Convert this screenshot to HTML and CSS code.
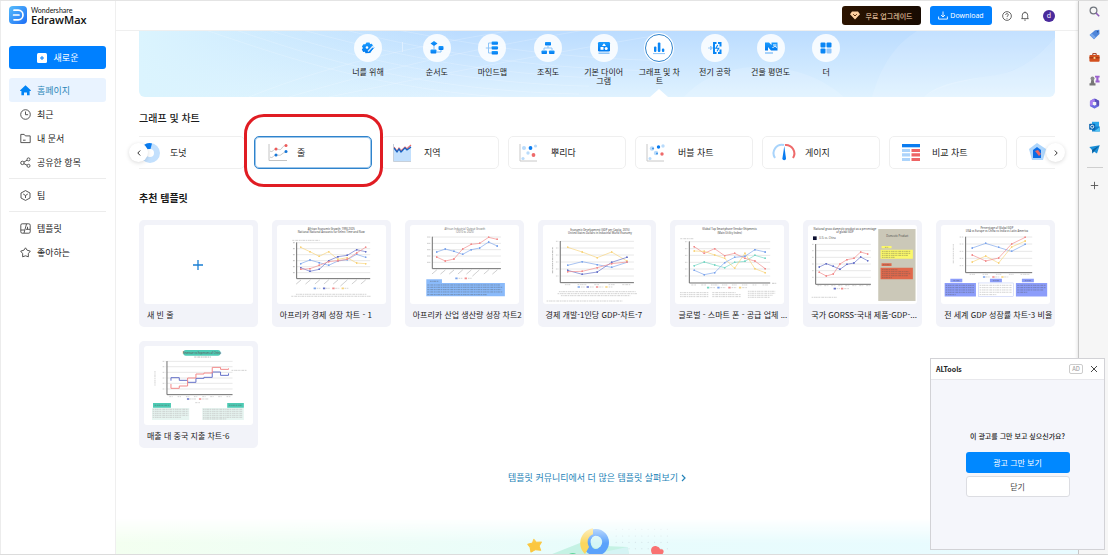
FILE: index.html
```html
<!DOCTYPE html>
<html lang="ko">
<head>
<meta charset="utf-8">
<title>EdrawMax</title>
<link rel="stylesheet" href="styles.css">
</head>
<body>
<svg class="defs" width="0" height="0" aria-hidden="true">
  <defs>
    <marker id="m-blue" viewBox="0 0 6 6" refX="3" refY="3" markerUnits="userSpaceOnUse" markerWidth="6" markerHeight="6"><circle cx="3" cy="3" r="3" fill="#7ba4ec"/></marker>
    <marker id="m-navy" viewBox="0 0 6 6" refX="3" refY="3" markerUnits="userSpaceOnUse" markerWidth="6" markerHeight="6"><circle cx="3" cy="3" r="3" fill="#6470c8"/></marker>
    <marker id="m-red" viewBox="0 0 6 6" refX="3" refY="3" markerUnits="userSpaceOnUse" markerWidth="6" markerHeight="6"><circle cx="3" cy="3" r="3" fill="#f28b8b"/></marker>
    <marker id="m-yellow" viewBox="0 0 6 6" refX="3" refY="3" markerUnits="userSpaceOnUse" markerWidth="6" markerHeight="6"><circle cx="3" cy="3" r="3" fill="#f8d37a"/></marker>
    <marker id="m-teal" viewBox="0 0 6 6" refX="3" refY="3" markerUnits="userSpaceOnUse" markerWidth="6" markerHeight="6"><circle cx="3" cy="3" r="3" fill="#74d6c4"/></marker>
    <linearGradient id="g-logo" x1="0" y1="0" x2="1" y2="1"><stop offset="0" stop-color="#57bdfb"/><stop offset="1" stop-color="#1c6df6"/></linearGradient>
    <linearGradient id="g-blue" x1="0" y1="0" x2="0" y2="1"><stop offset="0" stop-color="#1a9bff"/><stop offset="1" stop-color="#0079ee"/></linearGradient>
  </defs>
</svg>

<div class="app">
  <aside class="sidebar">
    <a class="logo" href="#">
      <svg class="logo-mark" viewBox="0 0 18 18"><rect width="18" height="18" rx="4" fill="url(#g-logo)"/><path d="M5 4.2h4.2a4.8 4.8 0 0 1 0 9.6H5M4.6 9h5.4" fill="none" stroke="#fff" stroke-width="1.7" stroke-linecap="round"/></svg>
      <span class="logo-text"><span class="logo-top">Wondershare</span><strong class="logo-name">EdrawMax</strong></span>
    </a>
    <button class="new-btn" type="button">
      <svg viewBox="0 0 10 10"><rect width="10" height="10" rx="1.5" fill="#fff"/><path d="M5 3v4M3 5h4" stroke="#0080ff" stroke-width="1"/></svg>
      <span>새로운</span>
    </button>
    <nav class="menu">
      <a class="menu-item active" href="#"><svg viewBox="0 0 11 11"><path d="M5.5.3 10.8 5.3c.3.4.1.8-.4.8H9.6v4.2H7V7.4H4v2.9H1.4V6.1H.6c-.5 0-.7-.4-.4-.8z" fill="#0083f5"/></svg>홈페이지</a>
      <a class="menu-item" href="#"><svg class="line" viewBox="0 0 11 11"><circle cx="5.5" cy="5.5" r="4.8"/><path d="M5.5 2.500v3.200h2.600"/></svg>최근</a>
      <a class="menu-item" href="#"><svg class="line" viewBox="0 0 11 11"><path d="M.8 9.600V1.400h3.400l1.200 1.500h4.800v6.700zM3 7.200h2.600"/></svg>내 문서</a>
      <a class="menu-item" href="#"><svg class="line" viewBox="0 0 11 11"><circle cx="2.4" cy="5.9" r="1.7"/><circle cx="8.5" cy="2.4" r="1.5"/><circle cx="8.5" cy="8.8" r="1.5"/><path d="M3.900 5.100l3.200-1.900M3.900 6.700l3.200 1.500"/></svg>공유한 항목</a>
      <hr>
      <a class="menu-item" href="#"><svg class="line" viewBox="0 0 11 11"><path d="M5.500.6 10 3v5L5.500 10.400 1 8V3zM3.200 4l2.300 1.500L7.800 4M5.500 5.500V8"/></svg>팀</a>
      <hr>
      <a class="menu-item" href="#"><svg class="line" viewBox="0 0 11 11"><rect x=".8" y=".8" width="9.4" height="9.4" rx="1.4"/><path d="M6.500 1 4 10M6 6.300h4M7.500 6.300V3.800M1 7h3.600"/></svg>템플릿</a>
      <a class="menu-item" href="#"><svg class="line" viewBox="0 0 11 11"><path d="M5.500.8 7.100 3.200l3.200.9-2 2.600.1 3.100-2.900-1-2.900 1 .1-3.100-2-2.600 3.200-.9z" stroke-linejoin="round"/></svg>좋아하는</a>
    </nav>
  </aside>

  <main class="main">
    <header class="topbar">
      <button class="upgrade" type="button"><svg viewBox="0 0 10 9"><path d="M2 .5h6L10 3.300 5 8.600 0 3.300z" fill="#ffd0a0"/><path d="M3.200 3.200 5 5l1.800-1.800" fill="none" stroke="#5a2c08" stroke-width="1"/></svg>무료 업그레이드</button>
      <button class="download" type="button"><svg viewBox="0 0 10 9"><path d="M5 .5v5M3 4l2 2 2-2M.6 5.500v2.600h8.800V5.500" fill="none" stroke="#fff" stroke-width=".9"/></svg>Download</button>
      <button class="icon-btn" type="button" aria-label="도움말"><svg class="line" viewBox="0 0 11 11"><circle cx="5.5" cy="5.5" r="4.8"/><path d="M4 4.300c.1-2 3-1.800 3-.1 0 1.100-1.500 1.200-1.500 2.300M5.500 7.600v.9"/></svg></button>
      <button class="icon-btn" type="button" aria-label="알림"><svg class="line" viewBox="0 0 11 11"><path d="M1.500 8.400h8M2.500 8.300V4.600a3 3 0 0 1 6 0v3.700M4.600 10h1.800M5.500.6v1"/></svg></button>
      <button class="avatar" type="button">d</button>
    </header>

    <div class="content">
      <section class="banner">
        <svg class="banner-art" viewBox="0 0 916 67" preserveAspectRatio="none" aria-hidden="true">
          <g fill="none" stroke="#fff" stroke-opacity=".2"><path d="M40-10C130 20 240 66 420 70M70-10C160 20 260 60 440 64M100-10C190 18 290 52 450 56M130-10C220 14 320 44 470 48M170-10C250 10 350 36 500 40M210-10C300 6 380 26 520 30"/><path d="M150 67C240 40 330 18 470-5M110 67C200 30 300 10 420-8M190 67C290 46 380 28 520 4"/></g>
          <path d="M733 67C742 35 756 14 778 0H916V6C900 26 882 40 856 45S800 55 785 67z" fill="#fff" fill-opacity=".13"/>
          <path d="M785 67C800 52 830 49 856 45S902 24 916 6V67z" fill="#fff" fill-opacity=".22"/>
          <path d="M545 67C580 26 660 26 705 67z" fill="#fff" fill-opacity=".14"/>
        </svg>
        <nav class="cats">
          <a class="cat" href="#"><span class="disc"><svg viewBox="0 0 14 14"><path d="M5.500 1.500h3l.6 1.600 1.700-.4 1.600 2.600-1.200 1.200 1 1-3 4.600-4.700.1-.6-1.400-1.700.2-1.400-2.600L2 7 .9 5.600l1.500-2.400 1.900.1z" fill="url(#g-blue)"/><path d="M7 10.500 12 5" stroke="#dcecff" stroke-width="1.200"/><path d="M8 12 13 6.500" stroke="#0a86f5" stroke-width="1"/><circle cx="6" cy="6.500" r="1.300" fill="#fff"/></svg></span>너를 위해</a>
          <span class="cat-rule"></span>
          <a class="cat" href="#"><span class="disc"><svg viewBox="0 0 14 14"><path d="M4 0 7.500 2.500 4 5 .5 2.500z" fill="url(#g-blue)"/><rect x=".5" y="8.500" width="6" height="4" rx="1" fill="url(#g-blue)"/><rect x="8.500" y="5" width="5" height="4" rx="1" fill="url(#g-blue)"/><path d="M4 5v4M7 11h4V9" fill="none" stroke="#7dbcf8"/></svg></span>순서도</a>
          <a class="cat" href="#"><span class="disc"><svg viewBox="0 0 14 14"><rect x="6.500" y=".5" width="6.500" height="3.300" rx="1" fill="url(#g-blue)"/><rect x="6.500" y="5.300" width="6.500" height="3.300" rx="1" fill="url(#g-blue)"/><rect x="6.500" y="10.100" width="6.500" height="3.300" rx="1" fill="url(#g-blue)"/><path d="M6.500 2H3.500v10h3M.8 7h5.700" fill="none" stroke="#8dc4f8"/></svg></span>마인드맵</a>
          <a class="cat" href="#"><span class="disc"><svg viewBox="0 0 14 14"><rect x="4" y="1" width="6" height="3.500" rx=".8" fill="url(#g-blue)"/><rect x=".5" y="9.500" width="5.500" height="3.500" rx=".8" fill="url(#g-blue)"/><rect x="8" y="9.500" width="5.500" height="3.500" rx=".8" fill="url(#g-blue)"/><path d="M7 4.500V7M3 9.500V7h8v2.500" fill="none" stroke="#8dc4f8"/></svg></span>조직도</a>
          <a class="cat" href="#"><span class="disc"><svg viewBox="0 0 14 14"><rect x="1" y="1" width="12" height="9.500" rx="1.200" fill="url(#g-blue)"/><path d="M7 2.200 9 5H5z" fill="#fff"/><rect x="3.500" y="6" width="3" height="2.800" fill="#fff"/><circle cx="9.200" cy="7.400" r="1.500" fill="#fff"/><rect x="1.500" y="11.500" width="11" height="1.500" fill="#8dc4f8"/></svg></span>기본 다이어그램</a>
          <a class="cat active" href="#"><span class="disc"><svg viewBox="0 0 14 14"><rect x="2" y="5.500" width="2.400" height="5.500" rx="1" fill="#0a86f5"/><rect x="5.800" y="1.500" width="2.600" height="9.500" rx="1" fill="#0a86f5"/><rect x="9.900" y="7.500" width="2.400" height="3.500" rx="1" fill="#0a86f5"/><path d="M1 12.600h12" stroke="#8dc4f8" stroke-width="1"/></svg></span>그래프 및 차트</a>
          <a class="cat" href="#"><span class="disc"><svg viewBox="0 0 14 14"><path d="M6.500 2H6v10h.500M6 2h2.500M6 12h2.500M10 2h2.500v3.500M12.500 8.500V12H10" fill="none" stroke="#0a86f5" stroke-width="2"/><path d="M9.800 4 7.800 7.300h3L9 10.300" fill="none" stroke="#0a86f5" stroke-width="1.100"/><path d="M0 7h2M2.500 5v4l2-2z" fill="#8dc4f8" stroke="#8dc4f8" stroke-width=".8"/></svg></span>전기 공학</a>
          <a class="cat" href="#"><span class="disc"><svg viewBox="0 0 14 14"><path d="M1 1.500h4L7.500 4V1.500h6v8H7L4 6v3.500H1z" fill="url(#g-blue)"/><path d="M9 4h3.500M8.500 7c1.500-2 3-2 4.500-.5" fill="none" stroke="#fff" stroke-width="1"/><path d="M1 12h8" stroke="#8dc4f8" stroke-width="1.600"/></svg></span>건물 평면도</a>
          <a class="cat" href="#"><span class="disc"><svg viewBox="0 0 14 14"><rect x="1.500" y="1.500" width="5" height="5" rx="1" fill="#0a86f5"/><rect x="7.500" y="1.500" width="5" height="5" rx="1" fill="#0a86f5"/><rect x="1.500" y="7.500" width="5" height="5" rx="1" fill="#0a86f5"/><rect x="7.500" y="7.500" width="5" height="5" rx="1" fill="#93c6fa"/></svg></span>더</a>
        </nav>
      </section>

      <h2 class="title light">그래프 및 차트</h2>
      <div class="carousel">
        <div class="track-clip">
          <div class="track">
            <a class="type" href="#"><svg viewBox="0 0 20 20"><circle cx="9" cy="10" r="7" fill="none" stroke="#c3e0fd" stroke-width="6"/><path d="M3 2Q7-1 11 .5L9.500 6H6z" fill="#0a7cf0"/></svg>도넛</a>
            <a class="type selected" href="#"><svg viewBox="0 0 20 20"><path d="M1 1v16.500h18" fill="none" stroke="#c4c4c4"/><path d="M2 8c3 2 3-2 6-2s4 2 6-1 3-2 4-3M2 14c3 2 3-2 6-2s4 1 6-1 3-1 4-2" fill="none" stroke="#b9b9b9" stroke-width=".8"/><circle cx="8" cy="6" r="1.500" fill="#ee5a5a"/><circle cx="18" cy="2.500" r="1.500" fill="#ee5a5a"/><circle cx="8" cy="12" r="1.500" fill="#1677d8"/><circle cx="18" cy="8.500" r="1.500" fill="#1677d8"/></svg>줄</a>
            <a class="type" href="#"><svg viewBox="0 0 20 20"><g transform="translate(-2)"><path d="M1 6 4 9l3-4 4 3 3-4 4-2v16H1z" fill="#c3e0fd"/><path d="M1 4l3 4 2-3 2 3 4-4 2 2 4-4" fill="none" stroke="#ee6a6a" stroke-width="1.200"/><path d="M1 5l3 4 2-3 2 3 4-4 2 2 4-3" fill="none" stroke="#1263c4" stroke-width="1.300"/><path d="M.5 1v17.500H18" fill="none" stroke="#b9c4d0" stroke-width=".8"/></g></svg>지역</a>
            <a class="type" href="#"><svg viewBox="0 0 20 20"><path d="M-2 1v17h17" fill="none" stroke="#c8c8c8"/><g fill="#b9dbfb"><circle cx="2" cy="5" r="2"/><circle cx="13.500" cy="3" r="1.600"/><circle cx="6" cy="10" r="1.700"/><circle cx="1" cy="15.500" r="1.600"/></g><circle cx="8.500" cy="5" r="1.900" fill="#0a7cf0"/><circle cx="11.500" cy="12" r="1.900" fill="#ee6a6a"/></svg>뿌리다</a>
            <a class="type" href="#"><svg viewBox="0 0 20 20"><path d="M-2 1v17h17" fill="none" stroke="#c8c8c8"/><g fill="#b9dbfb"><circle cx="3" cy="5.500" r="2.200"/><circle cx="14" cy="3" r="1.700"/><circle cx="7" cy="10" r="2.200"/><circle cx="1" cy="15.500" r="1.500"/></g><circle cx="4" cy="5.500" r="1" fill="#3c93e8"/><circle cx="9.500" cy="4" r="1.700" fill="#0a7cf0"/><circle cx="8" cy="10.500" r="1" fill="#3c93e8"/><circle cx="13" cy="11" r="1.700" fill="#ee6a6a"/></svg>버블 차트</a>
            <a class="type" href="#"><svg viewBox="0 0 20 20"><path d="M-1 15A8.500 8.500 0 0 1 8 2" fill="none" stroke="#a9d4fb" stroke-width="2"/><path d="M9 2A8.500 8.500 0 0 1 17 15" fill="none" stroke="#ee6a6a" stroke-width="2"/><path d="M8.300 3 10 15.500a1.700 1.700 0 0 1-3.600 0z" fill="#0a7cf0"/></svg>게이지</a>
            <a class="type" href="#"><svg viewBox="0 0 20 20"><rect x="-1" y="1" width="18" height="3.300" fill="#0a7cf0"/><path d="M-1 7.500h8M-1 11.800h8M-1 16.500h8" stroke="#acd4fb" stroke-width="3.200"/><path d="M8.500 7.500H17M8.500 11.800H17M8.500 16.500H17" stroke="#ee6464" stroke-width="3.200"/></svg>비교 차트</a>
            <a class="type" href="#" aria-label="레이더"><svg viewBox="0 0 20 20"><path d="M7 0 16 6 13 17H2L-1 6z" fill="#aed6fc"/><path d="M7 4 11 7v8H3V7z" fill="#0a6ce6"/><path d="M5 8l3-1 3 4-2 2z" fill="#ee6464"/></svg></a>
          </div>
        </div>
        <button class="arrow prev" type="button" aria-label="이전"><svg viewBox="0 0 8 8"><path d="M5.200 1.500 2.800 4l2.400 2.500"/></svg></button>
        <button class="arrow next" type="button" aria-label="다음"><svg viewBox="0 0 8 8"><path d="M2.800 1.500 5.200 4 2.800 6.500"/></svg></button>
        <span class="highlight"></span>
      </div>

      <h2 class="title">추천 템플릿</h2>
      <div class="templates">
        <a class="tpl" href="#"><span class="thumb"><svg class="plus" viewBox="0 0 10 10"><path d="M5 0v10M0 5h10" stroke="#1a7fd4" stroke-width="1.300"/></svg></span><span class="name">새 빈 줄</span></a>

        <a class="tpl" href="#"><span class="thumb"><svg class="chart" viewBox="441 30 327 237">
          <g class="head"><text x="604" y="45">African Economic Growth: 1990-2025</text><text x="604" y="54">National National Accounts for Select Time and Now</text></g>
          <path class="scrap" d="M487 76h82"/>
          <path class="grid" d="M500 83h221M500 101h221M500 119h221M500 137h221M500 155h221M500 173h221"/>
          <path class="axis" d="M500 82v109h221"/>
          <path class="ticks" d="M513 195l-14 12M541 195l-14 12M569 195l-14 12M596 195l-14 12M624 195l-14 12M652 195l-20 18M680 195l-14 12M707 195l-14 12M489 83h6M489 101h6M489 119h6M489 137h6M489 155h6M489 173h6"/>
          <polyline class="s yellow" points="512,97 540,110 568,124 596,110 624,133 652,128 680,144 707,146"/>
          <polyline class="s blue" points="512,146 540,135 568,143 596,151 624,138 652,134 680,118 707,127"/>
          <polyline class="s navy" points="512,158 540,169 568,163 596,137 624,125 652,121 680,104 707,110"/>
          <polyline class="s red" points="512,163 540,161 568,151 596,140 624,137 652,133 680,114 707,97"/>
          <path d="M551 220h7" class="k blue"/><path d="M579 220h7" class="k navy"/><path d="M607 220h7" class="k red"/><path d="M635 220h7" class="k yellow"/>
          <path class="scrap" d="M560 220h12M588 220h12M616 220h12M644 220h12M498 238h212M484 244h238"/>
        </svg></span><span class="name">아프리카 경제 성장 차트 - 1</span></a>

        <a class="tpl" href="#"><span class="thumb"><svg class="chart" viewBox="840 30 327 237">
          <g class="head sm"><text x="1005" y="46">African Industrial Output Growth</text><text x="1005" y="55">(2010 to 2025)</text></g>
          <path class="grid" d="M907 66h206M907 85h206M907 104h206M907 123h206M907 142h206"/>
          <path class="axis" d="M907 65v96h206"/>
          <path class="ticks" d="M920 165l-14 12M946 165l-14 12M972 165l-14 12M998 165l-14 12M1024 165l-14 12M1048 165l-20 18M1076 165l-14 12M1102 165l-14 12M892 66h9M892 85h9M892 104h9M892 123h9M892 142h9"/>
          <polyline class="s blue" points="920,111 946,102 972,109 998,118 1024,104 1049,99 1076,81 1102,93"/>
          <polyline class="s red" points="920,126 946,138 972,132 998,102 1024,88 1049,85 1076,67 1102,73"/>
          <path d="M976 190h7" class="k blue"/><path d="M1004 190h7" class="k red"/><path class="scrap" d="M986 190h12M1014 190h12"/>
          <path d="M889 193h47v11h189v40H889z" fill="#8abafa"/><path class="scrap dark" d="M900 199h25M892 210h218M892 217h226M892 224h222M892 231h226M892 239h180"/>
        </svg></span><span class="name">아프리카 산업 생산량 성장 차트2</span></a>

        <a class="tpl" href="#"><span class="thumb"><svg class="chart" viewBox="39 30 325 237">
          <g class="head"><text x="209" y="48">Economic Development (GDP per Capita, 2015)</text><text x="209" y="57">United States Dollars in Industrial World Economy</text></g>
          <path class="grid" d="M90 79h221M90 99h221M90 120h221M90 141h221M90 162h221M90 183h221"/>
          <path class="axis" d="M90 78v125h221"/>
          <path class="scrap dark" d="M67 97v78"/>
          <path class="scrap" d="M77 79h8M77 99h8M77 120h8M77 141h8M77 162h8M77 183h8M104 209h16M142 209h28M192 209h14M235 209h20M276 209h24"/>
          <polyline class="s yellow" points="112,97 156,111 201,128 244,111 290,138"/>
          <polyline class="s blue" points="112,151 156,140 201,149 244,157 290,142"/>
          <polyline class="s navy" points="112,166 156,178 201,171 244,142 290,127"/>
          <polyline class="s red" points="112,170 156,169 201,158 244,146 290,141"/>
          <path d="M142 216h7" class="k blue"/><path d="M169 216h7" class="k navy"/><path d="M197 216h7" class="k red"/><path d="M225 216h7" class="k yellow"/>
          <path class="scrap" d="M152 216h12M179 216h12M207 216h12M235 216h12M86 230h230M82 236h238M92 242h208M49 258h228"/>
        </svg></span><span class="name">경제 개발-1인당 GDP-차트-7</span></a>

        <a class="tpl" href="#"><span class="thumb"><svg class="chart" viewBox="435 30 327 237">
          <g class="head"><text x="599" y="46">Global Top Smartphone Vendor Shipments</text><text x="599" y="57">(Main Utility Index)</text></g>
          <path class="scrap" d="M451 71h41"/>
          <path class="grid" d="M478 80h243M478 101h243M478 121h243M478 142h243M478 162h243M478 183h243"/>
          <path class="axis" d="M478 79v125h243"/>
          <path class="scrap dark" d="M727 205h12"/>
          <path class="scrap" d="M465 80h8M465 101h8M465 121h8M465 142h8M465 162h8M465 183h8M484 210h14M514 210h14M543 210h22M576 210h16M606 210h14M636 210h16M668 210h12M698 210h16"/>
          <polyline class="s teal" points="493,152 523,141 554,150 584,158 614,142 645,139 675,121 706,130"/>
          <polyline class="s red" points="493,95 523,115 554,101 584,122 614,115 645,130 675,138 706,161"/>
          <polyline class="s yellow" points="493,108 523,109 554,120 584,130 614,160 645,115 675,161 706,173"/>
          <polyline class="s blue" points="493,166 523,179 554,173 584,143 614,127 645,124 675,104 706,111"/>
          <path d="M531 218h7" class="k teal"/><path d="M562 218h7" class="k blue"/><path d="M595 218h7" class="k red"/><path d="M627 218h7" class="k yellow"/>
          <path class="scrap" d="M541 218h14M572 218h14M605 218h14M637 218h14M450 233h86M450 239h86M450 245h86M547 233h70M547 239h86M547 245h86M654 229h82M654 235h82M654 241h74M654 247h66"/>
        </svg></span><span class="name">글로벌 - 스마트 폰 - 공급 업체 ...</span></a>

        <a class="tpl" href="#"><span class="thumb"><svg class="chart" viewBox="39 30 327 237">
          <g class="head"><text x="150" y="45">National gross domestic product as a percentage</text><text x="150" y="54">of global GDP</text></g>
          <rect x="54" y="64" width="11" height="11" fill="#0d1030"/><text class="lbl" x="73" y="73">U.S. vs. China</text>
          <path class="grid" d="M62 88h166M62 107h166M62 127h166M62 147h166M62 167h166M62 187h166"/>
          <path class="axis" d="M62 87v121h166"/>
          <path class="scrap" d="M51 88h6M51 107h6M51 127h6M51 147h6M51 167h6M51 187h6M67 212h12M88 212h12M109 212h12M130 212h12M151 212h12M172 212h12M193 212h12M214 212h12M125 221h10M148 221h14M50 247h75"/>
          <polyline class="s navy" points="73,156 94,146 115,154 135,163 156,148 177,144 197,126 218,137"/>
          <polyline class="s red" points="73,172 94,183 115,177 135,147 156,134 177,130 197,111 218,117"/>
          <path d="M116 221h7" class="k navy"/><path d="M138 221h7" class="k red"/>
          <rect x="250" y="42" width="112" height="216" fill="#cbc8b8"/><text class="lbl" x="274" y="66">Domestic Product</text>
          <path d="M260 93h30v7h-30zM257 104h97v27h-97z" fill="#fbf86a"/><path d="M260 145h30v8h-30zM257 158h97v35h-97z" fill="#e0694c"/>
          <path class="scrap dark" d="M270 97h10M261 109h86M261 115h86M261 121h80M261 127h40M264 149h22M261 164h48M261 170h82M261 176h86M261 182h80M261 188h30"/>
        </svg></span><span class="name">국가 GORSS-국내 제품-GDP-...</span></a>

        <a class="tpl" href="#"><span class="thumb"><svg class="chart" viewBox="438 30 327 237">
          <g class="head"><text x="606" y="43">Percentage of Global GDP</text><text x="606" y="52">USA vs Europe vs China vs India vs Latin America</text></g>
          <path class="grid" d="M512 66h200M512 87h200M512 109h200M512 130h200M512 152h200"/>
          <path class="axis" d="M512 65v108h200"/>
          <path class="scrap" d="M475 87v58M494 66h12M494 87h12M494 109h12M494 130h12M494 152h12M524 178h16M563 178h16M603 178h16M642 178h14M677 178h28"/>
          <polyline class="s blue" points="532,99 572,85 611,97 650,109 691,88"/>
          <polyline class="s yellow" points="532,141 572,123 611,144 650,96 691,78"/>
          <polyline class="s red" points="532,120 572,138 611,129 650,87 691,67"/>
          <path d="M564 186h7" class="k blue"/><path d="M592 186h7" class="k red"/><path d="M619 186h7" class="k yellow"/><path class="scrap" d="M573 186h12M601 186h12M628 186h12"/>
          <path d="M466 191h36v11h-36zM585 191h36v11h-36zM681 191h36v11h-36zM449 204h94v41h-94zM663 204h94v41h-94z" fill="#8c9dfa"/><rect x="550" y="204" width="105" height="41" fill="#fff" stroke="#93a6f0"/>
          <path class="scrap dark" d="M475 197h18M594 197h18M690 197h18M452 211h86M452 218h86M452 225h86M452 232h86M452 239h30M667 211h86M667 218h86M667 225h80M667 232h30"/><path class="scrap" d="M554 211h96M554 218h96M554 225h96M554 232h96M554 239h50"/>
        </svg></span><span class="name">전 세계 GDP 성장률 차트-3 비율</span></a>

        <a class="tpl" href="#"><span class="thumb"><svg class="chart" viewBox="42 33 327 237">
          <rect x="160" y="45" width="112" height="17" rx="8" fill="#4dcab4"/>
          <g class="head"><text x="216" y="56">Revenue vs Expenses of China</text></g><path class="scrap dark" d="M193 66h50"/>
          <path class="grid" d="M111 79h197M111 95h197M111 112h197M111 129h197M111 145h197M111 162h197"/>
          <path class="axis" d="M111 78v101h197"/>
          <path class="scrap" d="M75 108v44M98 79h8M98 95h8M98 112h8M98 129h8M98 145h8M98 162h8M118 185h10M143 185h10M168 185h10M192 185h10M217 185h10M241 185h10M265 185h10M290 185h12M305 106h47M180 192h20M217 192h20M196 203h14"/>
          <path class="step navy" d="M123 137v-9h25v8h25v6h25v-12h24v-3h25v-16h25v10h24v-6"/>
          <path class="step red" d="M123 147v13h25v-7h25v-24h25v-12h24v-3h25v-17h25v6h24v-3"/>
          <path d="M171 192h7" class="k navy"/><path d="M207 192h7" class="k red"/>
          <path d="M69 204h54v14H69zM292 204h50v14h-50z" fill="#4dcab4"/><path d="M66 219h112v36H66zM217 219h125v36H217z" fill="#e7f5f1"/>
          <path class="scrap dark" d="M74 211h44M297 211h40"/><path class="scrap" d="M68 223h108M68 229h108M68 235h108M68 241h108M68 247h86M219 223h120M219 229h120M219 235h120M219 241h120M219 247h120M219 252h70"/>
        </svg></span><span class="name">매출 대 중국 지출 차트-6</span></a>
      </div>

      <a class="more" href="#">템플릿 커뮤니티에서 더 많은 템플릿 살펴보기 <svg viewBox="0 0 5 8"><path d="M1 1l3 3-3 3" fill="none" stroke="#2583b8" stroke-width="1.200"/></svg></a>
    </div>

    <footer class="foot">
      <svg viewBox="42 525 500 90" preserveAspectRatio="none" aria-hidden="true">
        <g fill="none" stroke="#cfdfe4" stroke-width="3" stroke-linecap="round" stroke-dasharray="0 16"><path d="M340 541h132M340 561h132M340 580h132M340 599h132"/></g>
        <path d="M180 615 262 576 300 590 368 594 372 615z" fill="#c5f2e4"/><path d="M300 611 368 594 372 615H290z" fill="#d5f4f4"/><path d="M222 615q10-6 18 0z" fill="#5fd69c"/>
        <ellipse cx="289" cy="580" rx="23" ry="30" fill="none" stroke="#5ba2fb" stroke-width="20"/><path d="M262 615C240 590 250 545 282 538V556C268 562 266 580 272 594z" fill="#fbd75f"/><ellipse cx="291" cy="579" rx="14" ry="18" fill="#d4f5f6"/>
        <path d="M134 571l6 9 13-1-6 12 4 13-13-2-11 7-2-14-6-9 12-4z" fill="#fbc740" stroke="#fbc740" stroke-width="3" stroke-linejoin="round"/>
        <path d="M430 615C423 602 430 588 441 592 449 595 449 600 450 601 457 599 462 606 456 615z" fill="#f97272"/>
      </svg>
    </footer>
  </main>

  <aside class="edge">
    <button type="button" aria-label="검색"><svg viewBox="0 0 11 11"><circle cx="4.500" cy="4.500" r="3.400" fill="none" stroke="#70757d" stroke-width="1.200"/><path d="M7 7l3.200 3.200" stroke="#8e5cb8" stroke-width="1.600"/></svg></button>
    <button type="button" aria-label="쇼핑"><svg viewBox="0 0 11 11"><path d="M6 1.200 10.300.8 10.500 5 5 10.200.6 6z" fill="#4f86da"/><path d="M.6 6 5 10.200 7 8.300 2.600 4.200z" fill="#76a6ea"/><circle cx="8.600" cy="2.800" r=".8" fill="#234f96"/></svg></button>
    <button type="button" aria-label="도구"><svg viewBox="0 0 11 11"><path d="M3.800 3V1.600h3.400V3" fill="none" stroke="#a5391a" stroke-width="1"/><rect x=".4" y="3" width="10.200" height="6.800" rx="1" fill="#d3501e"/><path d="M.4 5.800h10.200" stroke="#8f2f12" stroke-width=".9"/><rect x="4.600" y="4.900" width="1.800" height="2" fill="#ffd08a"/></svg></button>
    <button type="button" aria-label="게임"><svg viewBox="0 0 11 11"><circle cx="3.500" cy="3.500" r="2" fill="#8a8a8a"/><path d="M2.300 5h2.400l.6 3.200H6.500v2.300H.5V8.200h1.200z" fill="#777"/><path d="M6 .8h4.600v1.800H9.500v3h1.100v1.900H6.500V5.600h.8v-3H6z" fill="#9b62cf"/></svg></button>
    <button type="button" aria-label="Microsoft 365"><svg viewBox="0 0 11 11"><path d="M5.500 1.800 8.800 3.600v3.800L5.500 9.200 2.200 7.400V3.600z" fill="none" stroke="#6a6be0" stroke-width="2.600" stroke-linejoin="round"/><path d="M5.500 1.800 8.800 3.600v3.800" fill="none" stroke="#5a50b8" stroke-width="2.600"/><path d="M2.200 7.400V3.600l3.300-1.800" fill="none" stroke="#a97cf0" stroke-width="2.400"/></svg></button>
    <button type="button" aria-label="Outlook"><svg viewBox="0 0 11 11"><rect x="3" y=".8" width="7" height="6" fill="#2aa6ea"/><path d="M3 5.500h7.800v5H3z" fill="#1680cc"/><path d="M5 10.500 10.800 6v4.500z" fill="#52c4f4"/><rect x=".2" y="2.700" width="6" height="6" rx=".8" fill="#0a64b0"/><circle cx="3.200" cy="5.700" r="1.500" fill="none" stroke="#fff" stroke-width=".9"/></svg></button>
    <button type="button" aria-label="드롭"><svg viewBox="0 0 11 11"><path d="M.3 3 10.700 1.200 8 9.500 4.800 7.500 3.500 9.500 3 6z" fill="#1a8fd8"/><path d="M3 6 10.700 1.200 4.800 7.500 3.500 9.500z" fill="#0a5f9e"/></svg></button>
    <hr>
    <button type="button" aria-label="추가"><svg viewBox="0 0 11 11"><path d="M5.500 1.800v7.400M1.800 5.500h7.400" stroke="#555" stroke-width=".9"/></svg></button>
  </aside>
</div>

<section class="ad">
  <header class="ad-head"><strong>ALTools</strong><span class="ad-tag">AD</span><button type="button" aria-label="닫기"><svg viewBox="0 0 8 8"><path d="M1 1l6 6M7 1 1 7" stroke="#333" stroke-width=".9"/></svg></button></header>
  <div class="ad-body">
    <p>이 광고를 그만 보고 싶으신가요?</p>
    <button class="ad-primary" type="button">광고 그만 보기</button>
    <button class="ad-secondary" type="button">닫기</button>
  </div>
</section>
</body>
</html>
```

FILE: styles.css
```css
* { box-sizing: border-box; }

body {
  margin: 0;
  font-family: "Noto Sans CJK KR", "Noto Sans", sans-serif;
  font-size: 9px;
  color: #222;
  background: #fff;
}

a { color: inherit; text-decoration: none; }
button { padding: 0; border: 0; background: none; font: inherit; color: inherit; }
svg { display: block; flex: none; overflow: visible; }
.defs { position: absolute; }
.line { fill: none; stroke: #444; stroke-width: 0.9; }

.app {
  display: grid;
  grid-template-columns: 116px minmax(0, 1fr) 30px;
  min-height: 100vh;
  border-top: 1px solid #e4e4e4;
  border-bottom: 1px solid #dcdcdc;
}

/* sidebar */
.sidebar { padding: 5px 9px 0 8px; border-right: 1px solid #efefef; border-left: 1px solid #ececec; }
.logo { display: flex; gap: 4px; height: 18px; align-items: center; color: #111; }
.logo-mark { width: 18px; height: 18px; }
.logo-text { display: flex; flex-direction: column; }
.logo-top { font: 7px/8px Lato, sans-serif; }
.logo-name { font: 600 11px/11px "Open Sans", sans-serif; }
.new-btn {
  display: flex; align-items: center; justify-content: center; gap: 7px;
  width: 100%; height: 23px; margin-top: 22px;
  border-radius: 3px; background: #0080ff; color: #fff;
}
.new-btn svg { width: 10px; height: 10px; }
.menu { margin-top: 9px; }
.menu-item { display: flex; align-items: center; gap: 6px; height: 24px; padding-left: 11px; border-radius: 3px; }
.menu-item svg { width: 11px; height: 11px; }
.menu-item.active { background: #e9f3ff; color: #2a86b8; }
.menu hr { height: 1px; margin: 4px 0; border: 0; background: #ececec; }

/* top bar */
.main { display: flex; flex-direction: column; }
.topbar {
  display: flex; align-items: center; justify-content: flex-end;
  height: 30px; padding-right: 23px; border-bottom: 1px solid #efefef; font-size: 8px;
}
.upgrade, .download { display: flex; align-items: center; justify-content: center; height: 19px; border-radius: 3px; font-size: 7px; }
.upgrade { width: 79px; gap: 5px; background: linear-gradient(90deg, #2c1400, #180b02); color: #ffd9b5; }
.download { width: 62px; gap: 2px; margin-left: 9px; background: #0080ff; color: #fff; font-family: "Noto Sans", sans-serif; }
.upgrade svg, .download svg { width: 10px; height: 9px; }
.icon-btn { margin-left: 8px; }
.download + .icon-btn { margin-left: 10px; }
.icon-btn svg { width: 10px; height: 10px; }
.avatar { width: 12px; height: 12px; margin-left: 13px; border-radius: 50%; background: #4a2a9c; color: #fff; font-size: 7px; line-height: 11px; }

/* banner */
.content { display: flex; flex-direction: column; padding: 0 23px; }
.banner {
  position: relative; height: 66px; overflow: hidden; border-radius: 0 0 6px 6px;
  background:
    linear-gradient(90deg, #dbf4fe 0, rgba(219, 244, 254, 0) 35%),
    linear-gradient(#bbdcff, #dff2ff);
}
.banner-art { position: absolute; inset: 0; width: 100%; height: 100%; }
.cats { position: relative; display: grid; grid-template-columns: 56px 13px repeat(8, minmax(0, 1fr)); width: 514px; height: 66px; margin: 0 auto; }
.cat { position: relative; display: flex; flex-direction: column; align-items: center; gap: 5px; padding: 3px 6px 0; font-size: 8px; line-height: 9px; text-align: center; }
.disc { display: flex; align-items: center; justify-content: center; flex: none; width: 28px; height: 28px; border-radius: 50%; background: rgba(255, 255, 255, 0.85); }
.disc svg { width: 14px; height: 14px; }
.cat.active .disc { border: 1px solid #2f83cc; background: #fff; box-shadow: 0 0 0 1px #fff; }
.cat.active::after { content: ""; position: absolute; bottom: 0; left: 50%; margin-left: -9px; border: 9px solid transparent; border-top: 0; border-bottom: 8px solid #fff; }
.cat-rule { width: 1px; height: 10px; margin: 11px 0 0 6px; background: #dfefff; }

/* chart types */
.title { margin: 13px 0 0; font-size: 10px; line-height: 16px; font-weight: 600; color: #1b1b1b; }
.title.light { font-weight: 500; }
.carousel { position: relative; margin-top: 10px; }
.track-clip { overflow: hidden; }
.track { display: flex; gap: 9px; margin-left: -12px; }
.type { display: flex; align-items: center; flex: none; gap: 9px; width: 118px; height: 33px; padding-left: 13px; border: 1px solid #efefef; border-radius: 5px; }
.type svg { width: 20px; height: 20px; }
.type.selected { border: 1px solid #2f83cc; box-shadow: inset 0 0 0 1px #9cc6ea; }
.arrow { position: absolute; top: 7px; display: flex; align-items: center; justify-content: center; width: 19px; height: 19px; border-radius: 50%; background: #fff; box-shadow: 0 1px 4px rgba(0, 0, 0, 0.15); }
.arrow svg { width: 8px; height: 8px; fill: none; stroke: #333; stroke-width: 1; }
.prev { left: -10px; }
.next { right: -10px; }
.highlight { position: absolute; left: 105px; top: -22px; width: 139px; height: 73px; border: 3px solid #e01c23; border-radius: 20px; pointer-events: none; }
.carousel + .title { margin-top: 21px; }

/* templates */
.templates { display: grid; grid-template-columns: repeat(7, minmax(0, 1fr)); gap: 14px; margin-top: 14px; }
.tpl { display: block; padding: 5px 5px 0; border-radius: 5px; background: #f2f3f9; }
.thumb { display: flex; align-items: center; justify-content: center; height: 79px; border-radius: 3px; background: #fff; overflow: hidden; }
.plus { width: 10px; height: 10px; }
.chart { width: 100%; height: 79px; }
.name { display: block; height: 23px; padding-left: 3px; font-size: 8px; line-height: 22px; white-space: nowrap; }
.head { font: 600 8px "Open Sans", sans-serif; fill: #666; text-anchor: middle; }
.head.sm { font-weight: 400; }
.lbl { font: 8px "Open Sans", sans-serif; fill: #444; }
.grid { fill: none; stroke: #dcdcdc; stroke-width: 2; }
.axis { fill: none; stroke: #6e6e6e; stroke-width: 3; }
.ticks { fill: none; stroke: #999; stroke-width: 2; stroke-dasharray: 3 1; }
.scrap { fill: none; stroke: #bcbcbc; stroke-width: 2; stroke-dasharray: 5 2 3 1 7 2; }
.scrap.dark { stroke: #555; stroke-opacity: 0.6; }
.s { fill: none; stroke-width: 2; }
.step { fill: none; stroke-width: 3; }
.k { stroke-width: 5; }
.blue { stroke: #7ba4ec; }
.navy { stroke: #6470c8; }
.red { stroke: #f28b8b; }
.yellow { stroke: #f8d37a; }
.teal { stroke: #74d6c4; }
.s.blue { marker: url(#m-blue); }
.s.navy { marker: url(#m-navy); }
.s.red { marker: url(#m-red); }
.s.yellow { marker: url(#m-yellow); }
.s.teal { marker: url(#m-teal); }
.more { display: flex; align-items: center; align-self: center; gap: 3px; margin-top: 23px; line-height: 14px; color: #2583b8; }
.more svg { width: 5px; height: 8px; }

.foot { display: flex; align-items: flex-end; justify-content: center; height: 36px; margin-top: auto; overflow: hidden; background: linear-gradient(90deg, #f3fff0, #e8fcfc 50%, #e8fbff); -webkit-mask-image: linear-gradient(transparent, #000 70%); mask-image: linear-gradient(transparent, #000 70%); }
.foot svg { width: 200px; height: 30px; }

/* browser side bar */
.edge { display: flex; flex-direction: column; align-items: center; gap: 12px; padding-top: 5px; padding-left: 2px; border-left: 1px solid #c6c6c6; background: #f6f6f6; box-shadow: -1px 0 3px rgba(0, 0, 0, 0.1); }
.edge svg { width: 11px; height: 11px; }
.edge hr { width: 16px; height: 1px; margin: 0; border: 0; background: #cfcfcf; }

/* ad pop-up */
.ad { position: fixed; right: 3px; bottom: 5px; display: flex; flex-direction: column; width: 175px; height: 192px; border: 1px solid #d2d2d6; background: #f5f6fb; }
.ad-head { display: flex; align-items: center; height: 21px; padding: 0 6px 0 5px; border-bottom: 1px solid #e8e8ec; background: #fff; font-size: 8px; }
.ad-head strong { font-size: 7px; }
.ad-tag { margin-left: auto; padding: 0 2px; border: 1px solid #ccc; border-radius: 2px; font-size: 6px; line-height: 8px; color: #999; }
.ad-head svg { width: 8px; height: 8px; margin-left: 7px; }
.ad-body { display: flex; flex: 1; flex-direction: column; align-items: center; justify-content: center; font-size: 8px; }
.ad-body p { margin: 0 0 11px; font-size: 7px; line-height: 10px; font-weight: 500; white-space: nowrap; }
.ad-body button { width: 104px; height: 21px; border-radius: 3px; }
.ad-primary { background: #0088ff; color: #fff; }
.ad-body .ad-secondary { margin: 3px 0 2px; border: 1px solid #dcdde2; background: #fff; color: #444; }
```
